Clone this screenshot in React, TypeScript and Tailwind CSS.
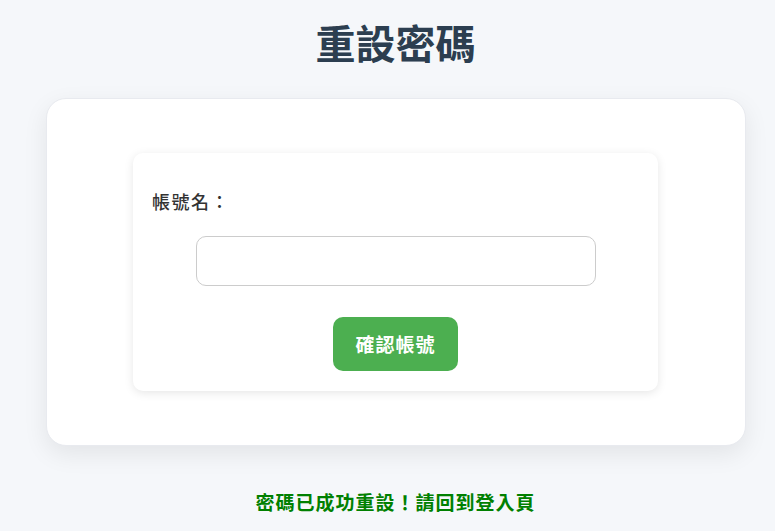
export default function App() {
  return (
    <div
      className="min-h-screen bg-[#f5f7fa] pl-4 flex flex-col items-center"
      style={{ fontFamily: '"Noto Sans CJK TC", "Noto Sans", sans-serif' }}
    >
      <h1 className="mt-[14px] text-[40px] leading-[56px] font-bold text-[#2c3e50]">重設密碼</h1>

      <div className="mt-[28px] w-[700px] bg-white rounded-[20px] shadow-[0_8px_24px_rgba(0,0,0,0.08)] border border-[#e8eaef] py-[54px] flex justify-center">
        <div className="w-[525px] bg-white rounded-[10px] shadow-[0_2px_10px_rgba(0,0,0,0.1)] px-[19px] pt-[34px] pb-[20px]">
          <label className="block text-[18px] leading-[28px] font-medium tracking-[1.5px] text-[#333]">帳號名：</label>
          <div className="mt-[21px] flex justify-center">
            <input
              type="text"
              className="w-[400px] h-[50px] rounded-[10px] border border-[#ccc] px-3 text-base outline-none"
            />
          </div>
          <div className="mt-[31px] flex justify-center">
            <button className="w-[125px] h-[54px] rounded-[10px] bg-[#4caf50] text-white text-[19px] font-bold tracking-[1px]">
              確認帳號
            </button>
          </div>
        </div>
      </div>

      <p className="mt-[42px] text-[19px] leading-[28px] font-bold tracking-[1px] text-[#008000]">密碼已成功重設！請回到登入頁</p>
    </div>
  );
}
